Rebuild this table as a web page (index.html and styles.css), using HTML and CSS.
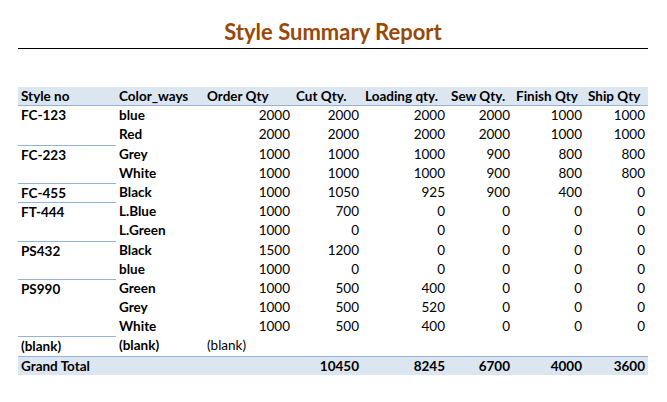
FILE: index.html
```html
<!DOCTYPE html>
<html>
<head>
<meta charset="utf-8">
<link rel="stylesheet" href="styles.css">
</head>
<body>
<div class="report">
  <h1 class="title">Style Summary Report</h1>
  <div class="grid">
    <div class="c h">Style no</div>
    <div class="c h">Color_ways</div>
    <div class="c h">Order Qty</div>
    <div class="c h">Cut Qty.</div>
    <div class="c h">Loading qty.</div>
    <div class="c h">Sew Qty.</div>
    <div class="c h">Finish Qty</div>
    <div class="c h">Ship Qty</div>

    <div class="c b">FC-123</div><div class="c b">blue</div><div class="c n">2000</div><div class="c n">2000</div><div class="c n">2000</div><div class="c n">2000</div><div class="c n">1000</div><div class="c n">1000</div>
    <div class="c b"></div><div class="c b">Red</div><div class="c n">2000</div><div class="c n">2000</div><div class="c n">2000</div><div class="c n">2000</div><div class="c n">1000</div><div class="c n">1000</div>
    <div class="c b sep">FC-223</div><div class="c b">Grey</div><div class="c n">1000</div><div class="c n">1000</div><div class="c n">1000</div><div class="c n">900</div><div class="c n">800</div><div class="c n">800</div>
    <div class="c b"></div><div class="c b">White</div><div class="c n">1000</div><div class="c n">1000</div><div class="c n">1000</div><div class="c n">900</div><div class="c n">800</div><div class="c n">800</div>
    <div class="c b sep">FC-455</div><div class="c b">Black</div><div class="c n">1000</div><div class="c n">1050</div><div class="c n">925</div><div class="c n">900</div><div class="c n">400</div><div class="c n">0</div>
    <div class="c b sep">FT-444</div><div class="c b">L.Blue</div><div class="c n">1000</div><div class="c n">700</div><div class="c n">0</div><div class="c n">0</div><div class="c n">0</div><div class="c n">0</div>
    <div class="c b"></div><div class="c b">L.Green</div><div class="c n">1000</div><div class="c n">0</div><div class="c n">0</div><div class="c n">0</div><div class="c n">0</div><div class="c n">0</div>
    <div class="c b sep">PS432</div><div class="c b">Black</div><div class="c n">1500</div><div class="c n">1200</div><div class="c n">0</div><div class="c n">0</div><div class="c n">0</div><div class="c n">0</div>
    <div class="c b"></div><div class="c b">blue</div><div class="c n">1000</div><div class="c n">0</div><div class="c n">0</div><div class="c n">0</div><div class="c n">0</div><div class="c n">0</div>
    <div class="c b sep">PS990</div><div class="c b">Green</div><div class="c n">1000</div><div class="c n">500</div><div class="c n">400</div><div class="c n">0</div><div class="c n">0</div><div class="c n">0</div>
    <div class="c b"></div><div class="c b">Grey</div><div class="c n">1000</div><div class="c n">500</div><div class="c n">520</div><div class="c n">0</div><div class="c n">0</div><div class="c n">0</div>
    <div class="c b"></div><div class="c b">White</div><div class="c n">1000</div><div class="c n">500</div><div class="c n">400</div><div class="c n">0</div><div class="c n">0</div><div class="c n">0</div>
    <div class="c b sep">(blank)</div><div class="c b">(blank)</div><div class="c">(blank)</div><div class="c"></div><div class="c"></div><div class="c"></div><div class="c"></div><div class="c"></div>

    <div class="c t">Grand Total</div><div class="c t"></div><div class="c t"></div><div class="c t n">10450</div><div class="c t n">8245</div><div class="c t n">6700</div><div class="c t n">4000</div><div class="c t n">3600</div>
  </div>
</div>
</body>
</html>
```

FILE: styles.css
```css
html, body {
  margin: 0;
  padding: 0;
  background: #ffffff;
}

body {
  font-family: Lato, "Open Sans", "Liberation Sans", sans-serif;
  color: #000000;
}

.report {
  width: 630px;
  margin-left: 18px;
}

.title {
  margin: 0;
  padding: 19px 0 3px 0;
  font-size: 22px;
  line-height: 26px;
  font-weight: 700;
  color: #984807;
  text-align: center;
  border-bottom: 1px solid #000000;
}

.grid {
  margin-top: 38px;
  display: grid;
  grid-template-columns: 98px 88px 89px 69px 86px 65px 72px 63px;
  grid-auto-rows: 19.2px;
  font-size: 13.5px;
}

.c {
  box-sizing: border-box;
  padding: 0 3px;
  line-height: 18px;
  white-space: nowrap;
  overflow: hidden;
}

.h {
  font-weight: 700;
  background: #dce6f1;
  border-bottom: 1px solid #95b3d7;
}

.b {
  font-weight: 700;
}

.n {
  text-align: right;
}

.sep {
  border-top: 1px solid #95b3d7;
}

.t {
  font-weight: 700;
  background: #dce6f1;
  border-top: 1px solid #95b3d7;
}
```
